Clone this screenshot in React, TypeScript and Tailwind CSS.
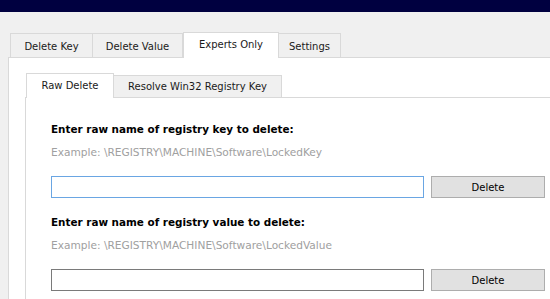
import React from "react";

const font = { fontFamily: '"DejaVu Sans", Verdana, sans-serif' };

function OuterTab({ label, w, selected }: { label: string; w: number; selected?: boolean }) {
  return (
    <div
      className={
        selected
          ? "relative z-10 -mb-px flex h-[26px] items-center justify-center border-x border-t border-[#d9d9d9] bg-white pb-[3px]"
          : "-ml-px flex h-[24px] items-center justify-center border-x border-t border-[#d9d9d9] bg-[#f0f0f0] pt-px first:ml-0"
      }
      style={{ width: w }}
    >
      {label}
    </div>
  );
}

function Section({ label, example, focused }: { label: string; example: string; focused?: boolean }) {
  return (
    <div className="flex flex-col">
      <div className="h-[13px] text-[10.4px] font-bold leading-[13px] text-black">{label}</div>
      <div className="mt-[10px] h-[13px] text-[10.6px] leading-[13px] text-[#a0a0a0]">{example}</div>
      <div className="mt-[17px] flex gap-[7px]">
        <div
          className={
            focused
              ? "h-[22px] w-[373px] border border-[#6aa6e3] bg-white"
              : "h-[22px] w-[373px] border border-[#7a7a7a] bg-white"
          }
        />
        <div className="flex h-[22px] w-[114px] items-center justify-center border border-[#adadad] bg-[#e1e1e1] text-[10px] text-black">
          Delete
        </div>
      </div>
    </div>
  );
}

export default function App() {
  return (
    <div className="h-[299px] w-[550px] overflow-hidden bg-[#f0f0f0] text-[10px] text-[#1a1a1a]" style={font}>
      <div className="h-[12px] bg-[#000040]" />
      <div className="pl-[8px] pt-[20px]">
        <div className="flex items-end pl-[2px]">
          <OuterTab label="Delete Key" w={83} />
          <OuterTab label="Delete Value" w={91} />
          <OuterTab label="Experts Only" w={96} selected />
          <OuterTab label="Settings" w={63} />
        </div>
        <div className="h-[260px] border-l border-t border-[#d9d9d9] bg-white pl-[16px] pt-[15px]">
          <div className="flex items-end pl-px">
            <div className="relative z-10 -mb-px flex h-[25px] w-[88px] items-center justify-center border-x border-t border-[#d9d9d9] bg-white pb-[2px]">
              Raw Delete
            </div>
            <div className="-ml-px flex h-[22px] w-[169px] items-center justify-center border-x border-t border-[#d9d9d9] bg-[#f0f0f0]">
              Resolve Win32 Registry Key
            </div>
          </div>
          <div className="h-[220px] border-l border-t border-[#d9d9d9] bg-white pl-[25px] pt-[25px]">
            <Section
              label="Enter raw name of registry key to delete:"
              example="Example: \REGISTRY\MACHINE\Software\LockedKey"
              focused
            />
            <div className="h-[18px]" />
            <Section
              label="Enter raw name of registry value to delete:"
              example="Example: \REGISTRY\MACHINE\Software\LockedValue"
            />
          </div>
        </div>
      </div>
    </div>
  );
}
